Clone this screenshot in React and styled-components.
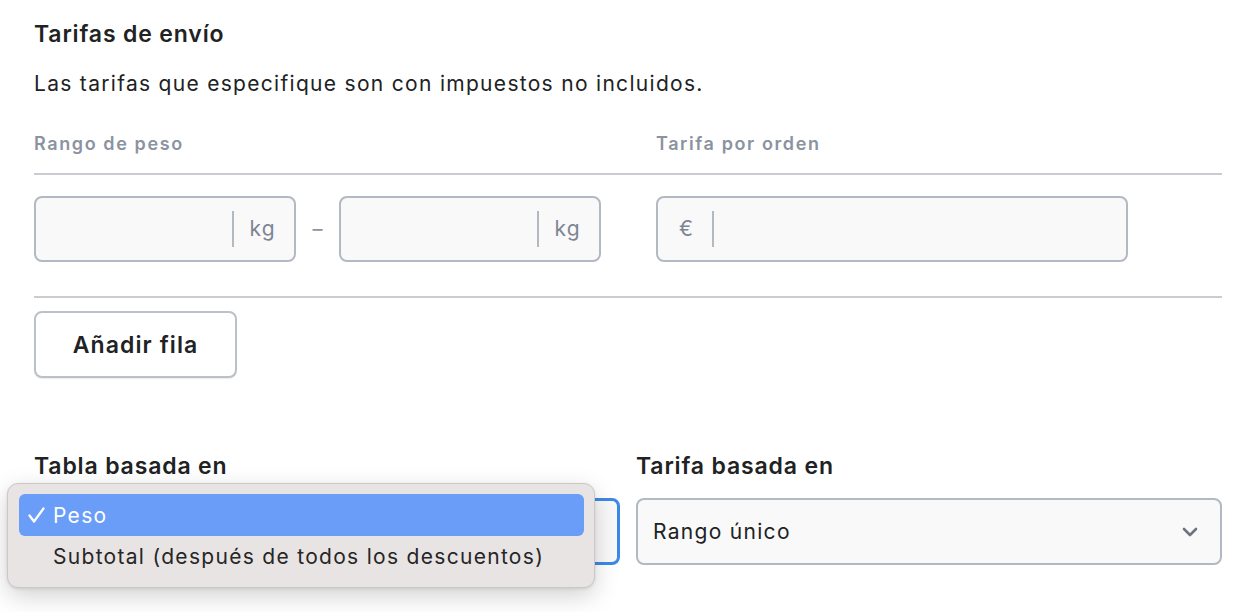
import React from "react";
import styled, { createGlobalStyle } from "styled-components";

const Global = createGlobalStyle`
  html, body { margin: 0; padding: 0; background: #ffffff; }
  body { font-family: Inter, "Noto Sans", sans-serif; color: #202223; -webkit-font-smoothing: antialiased; }
  * { box-sizing: border-box; }
`;

const Page = styled.div`
  width: 1234px;
  height: 612px;
  padding: 20px 12px 0 34px;
  position: relative;
  overflow: hidden;
`;

const Title = styled.h2`
  margin: 0;
  font-size: 23px;
  line-height: 28px;
  font-weight: 600;
  letter-spacing: 0.85px;
`;

const Lead = styled.p`
  margin: 22px 0 0;
  font-size: 21px;
  line-height: 28px;
  font-weight: 400;
  letter-spacing: 1.3px;
`;

const Table = styled.div`
  margin-top: 34px;
  width: 1188px;
`;

const HeadRow = styled.div`
  display: grid;
  grid-template-columns: 622px 1fr;
  padding-bottom: 17px;
  border-bottom: 2px solid #c9ccd1;
`;

const HeadCell = styled.div`
  font-size: 18px;
  line-height: 24px;
  font-weight: 600;
  letter-spacing: 1.6px;
  color: #8b93a1;
`;

const BodyRow = styled.div`
  display: grid;
  grid-template-columns: 622px 1fr;
  padding: 21px 0 34px;
  border-bottom: 2px solid #c9ccd1;
`;

const RangeGroup = styled.div`
  display: flex;
  align-items: center;
`;

const Field = styled.div`
  width: ${(p) => p.$w}px;
  height: 66px;
  display: flex;
  align-items: center;
  background: #f9f9fa;
  border: 2px solid #b3b9c2;
  border-radius: 8px;
  padding: ${(p) => (p.$prefix ? "0 18px 0 17px" : "0 18px")};
`;

const Blank = styled.div`
  flex: 1;
  height: 100%;
`;

const Affix = styled.span`
  font-size: 21px;
  line-height: 28px;
  letter-spacing: 1.3px;
  color: #7d8594;
  padding: ${(p) => (p.$before ? "0 18px 0 4px" : "0 0 0 15px")};
  border-${(p) => (p.$before ? "right" : "left")}: 2px solid #b3b9c2;
  height: 36px;
  display: flex;
  align-items: center;
`;

const Dash = styled.span`
  width: 43px;
  text-align: center;
  font-size: 20px;
  color: #8b93a1;
`;

const Button = styled.button`
  margin-top: 13px;
  width: 203px;
  height: 67px;
  background: #ffffff;
  border: 2px solid #bcc1c8;
  border-radius: 8px;
  box-shadow: 0 1px 1px rgba(0, 0, 0, 0.08);
  font-family: Inter, "Noto Sans", sans-serif;
  font-size: 23px;
  font-weight: 600;
  letter-spacing: 1.1px;
  color: #202223;
  cursor: pointer;
`;

const SelectsRow = styled.div`
  margin-top: 74px;
  width: 1188px;
  display: grid;
  grid-template-columns: 1fr 1fr;
  column-gap: 16px;
`;

const SelectField = styled.div`
  display: flex;
  flex-direction: column;
  gap: 18px;
`;

const Label = styled.div`
  font-size: 23px;
  line-height: 28px;
  font-weight: 600;
  letter-spacing: 0.85px;
`;

const SelectBox = styled.div`
  height: 67px;
  display: flex;
  align-items: center;
  justify-content: space-between;
  padding: 0 22px 0 15px;
  background: #f9f9fa;
  border: ${(p) => (p.$focus ? "3px solid #3d89e6" : "2px solid #b3b9c2")};
  border-radius: 8px;
  font-size: 21px;
  letter-spacing: 1.3px;
  color: #202223;
`;

const Menu = styled.div`
  position: absolute;
  left: 7px;
  top: 483px;
  width: 588px;
  padding: 10px 10px 11px 11px;
  background: #e9e4e4;
  border: 1px solid #cdc8c8;
  border-radius: 11px;
  box-shadow: 0 8px 24px rgba(0, 0, 0, 0.18), 0 1px 3px rgba(0, 0, 0, 0.1);
  font-family: Inter, "Noto Sans", sans-serif;
`;

const Option = styled.div`
  height: ${(p) => (p.$active ? 42 : 40)}px;
  display: flex;
  align-items: center;
  border-radius: 6px;
  background: ${(p) => (p.$active ? "#699df7" : "transparent")};
  color: ${(p) => (p.$active ? "#ffffff" : "#262626")};
  font-size: 21px;
  letter-spacing: 1.3px;
  padding-left: 9px;
`;

const Check = styled.span`
  width: 25px;
  display: inline-flex;
  align-items: center;
`;

const CheckIcon = () => (
  <svg width="17" height="16" viewBox="0 0 17 16">
    <path d="M1.5 8.5 L6 14.5 L15.5 1.5" fill="none" stroke="#ffffff" strokeWidth="2.3" strokeLinecap="round" strokeLinejoin="round" />
  </svg>
);

const Chevron = () => (
  <svg width="16" height="10" viewBox="0 0 16 10">
    <path d="M2 2 L8 8 L14 2" fill="none" stroke="#6d7480" strokeWidth="2.6" strokeLinecap="round" strokeLinejoin="round" />
  </svg>
);

export default function App() {
  return (
    <Page>
      <Global />
      <Title>Tarifas de envío</Title>
      <Lead>Las tarifas que especifique son con impuestos no incluidos.</Lead>
      <Table>
        <HeadRow>
          <HeadCell>Rango de peso</HeadCell>
          <HeadCell>Tarifa por orden</HeadCell>
        </HeadRow>
        <BodyRow>
          <RangeGroup>
            <Field $w={262}>
              <Blank />
              <Affix>kg</Affix>
            </Field>
            <Dash>–</Dash>
            <Field $w={262}>
              <Blank />
              <Affix>kg</Affix>
            </Field>
          </RangeGroup>
          <Field $w={472} $prefix>
            <Affix $before>€</Affix>
            <Blank />
          </Field>
        </BodyRow>
      </Table>
      <Button>Añadir fila</Button>
      <SelectsRow>
        <SelectField>
          <Label>Tabla basada en</Label>
          <SelectBox $focus>
            <span>Peso</span>
            <Chevron />
          </SelectBox>
        </SelectField>
        <SelectField>
          <Label>Tarifa basada en</Label>
          <SelectBox>
            <span>Rango único</span>
            <Chevron />
          </SelectBox>
        </SelectField>
      </SelectsRow>
      <Menu>
        <Option $active>
          <Check>
            <CheckIcon />
          </Check>
          Peso
        </Option>
        <Option>
          <Check />
          Subtotal (después de todos los descuentos)
        </Option>
      </Menu>
    </Page>
  );
}
